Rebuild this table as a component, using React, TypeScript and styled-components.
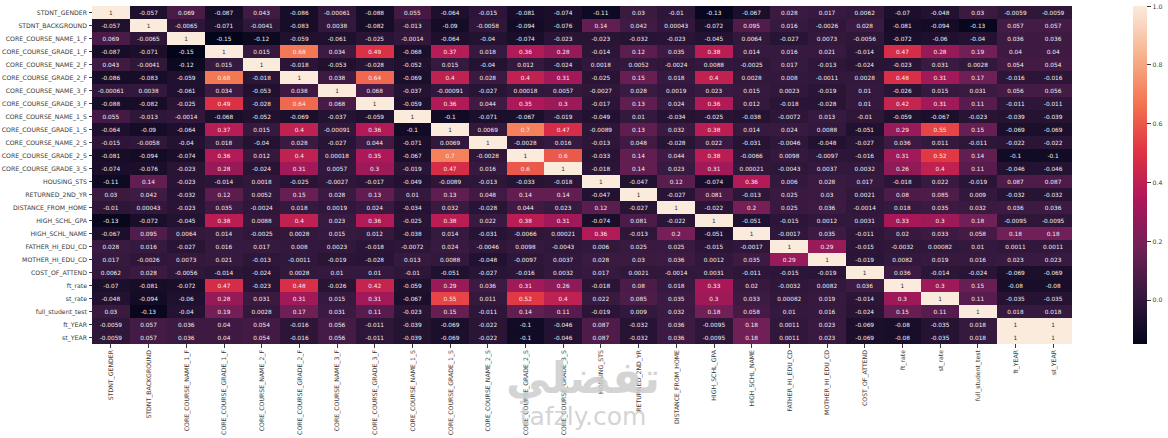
import React from 'react';
import styled, { createGlobalStyle } from 'styled-components';

const GlobalStyle = createGlobalStyle`
  html, body {
    margin: 0;
    padding: 0;
    background: #ffffff;
  }
  body {
    width: 1168px;
    height: 438px;
    overflow: hidden;
    font-family: "DejaVu Sans", "Liberation Sans", sans-serif;
  }
`;

const LABELS = [
  'STDNT_GENDER',
  'STDNT_BACKGROUND',
  'CORE_COURSE_NAME_1_F',
  'CORE_COURSE_GRADE_1_F',
  'CORE_COURSE_NAME_2_F',
  'CORE_COURSE_GRADE_2_F',
  'CORE_COURSE_NAME_3_F',
  'CORE_COURSE_GRADE_3_F',
  'CORE_COURSE_NAME_1_S',
  'CORE_COURSE_GRADE_1_S',
  'CORE_COURSE_NAME_2_S',
  'CORE_COURSE_GRADE_2_S',
  'CORE_COURSE_GRADE_3_S',
  'HOUSING_STS',
  'RETURNED_2ND_YR',
  'DISTANCE_FROM_HOME',
  'HIGH_SCHL_GPA',
  'HIGH_SCHL_NAME',
  'FATHER_HI_EDU_CD',
  'MOTHER_HI_EDU_CD',
  'COST_OF_ATTEND',
  'ft_rate',
  'st_rate',
  'full_student_test',
  'ft_YEAR',
  'st_YEAR'
];

// upper triangle of the correlation matrix, row i starts at column i
const UPPER: number[][] = [
  [1, -0.057, 0.069, -0.087, 0.043, -0.086, -0.00061, -0.088, 0.055, -0.064, -0.015, -0.081, -0.074, -0.11, 0.03, -0.01, -0.13, -0.067, 0.028, 0.017, 0.0062, -0.07, -0.048, 0.03, -0.0059, -0.0059],
  [1, -0.0065, -0.071, -0.0041, -0.083, 0.0038, -0.082, -0.013, -0.09, -0.0058, -0.094, -0.076, 0.14, 0.042, 0.00043, -0.072, 0.095, 0.016, -0.0026, 0.028, -0.081, -0.094, -0.13, 0.057, 0.057],
  [1, -0.15, -0.12, -0.059, -0.061, -0.025, -0.0014, -0.064, -0.04, -0.074, -0.023, -0.023, -0.032, -0.023, -0.045, 0.0064, -0.027, 0.0073, -0.0056, -0.072, -0.06, -0.04, 0.036, 0.036],
  [1, 0.015, 0.68, 0.034, 0.49, -0.068, 0.37, 0.018, 0.36, 0.28, -0.014, 0.12, 0.035, 0.38, 0.014, 0.016, 0.021, -0.014, 0.47, 0.28, 0.19, 0.04, 0.04],
  [1, -0.018, -0.053, -0.028, -0.052, 0.015, -0.04, 0.012, -0.024, 0.0018, 0.0052, -0.0024, 0.0088, -0.0025, 0.017, -0.013, -0.024, -0.023, 0.031, 0.0028, 0.054, 0.054],
  [1, 0.038, 0.64, -0.069, 0.4, 0.028, 0.4, 0.31, -0.025, 0.15, 0.018, 0.4, 0.0028, 0.008, -0.0011, 0.0028, 0.48, 0.31, 0.17, -0.016, -0.016],
  [1, 0.068, -0.037, -0.00091, -0.027, 0.00018, 0.0057, -0.0027, 0.028, 0.0019, 0.023, 0.015, 0.0023, -0.019, 0.01, -0.026, 0.015, 0.031, 0.056, 0.056],
  [1, -0.059, 0.36, 0.044, 0.35, 0.3, -0.017, 0.13, 0.024, 0.36, 0.012, -0.018, -0.028, 0.01, 0.42, 0.31, 0.11, -0.011, -0.011],
  [1, -0.1, -0.071, -0.067, -0.019, -0.049, 0.01, -0.034, -0.025, -0.038, -0.0072, 0.013, -0.01, -0.059, -0.067, -0.023, -0.039, -0.039],
  [1, 0.0069, 0.7, 0.47, -0.0089, 0.13, 0.032, 0.38, 0.014, 0.024, 0.0088, -0.051, 0.29, 0.55, 0.15, -0.069, -0.069],
  [1, -0.0028, 0.016, -0.013, 0.048, -0.028, 0.022, -0.031, -0.0046, -0.048, -0.027, 0.036, 0.011, -0.011, -0.022, -0.022],
  [1, 0.6, -0.033, 0.14, 0.044, 0.38, -0.0066, 0.0098, -0.0097, -0.016, 0.31, 0.52, 0.14, -0.1, -0.1],
  [1, -0.018, 0.14, 0.023, 0.31, 0.00021, -0.0043, 0.0037, 0.0032, 0.26, 0.4, 0.11, -0.046, -0.046],
  [1, -0.047, 0.12, -0.074, 0.36, 0.006, 0.028, 0.017, -0.018, 0.022, -0.019, 0.087, 0.087],
  [1, -0.027, 0.081, -0.013, 0.025, 0.03, 0.0021, 0.08, 0.085, 0.009, -0.032, -0.032],
  [1, -0.022, 0.2, 0.025, 0.036, -0.0014, 0.018, 0.035, 0.032, 0.036, 0.036],
  [1, -0.051, -0.015, 0.0012, 0.0031, 0.33, 0.3, 0.18, -0.0095, -0.0095],
  [1, -0.0017, 0.035, -0.011, 0.02, 0.033, 0.058, 0.18, 0.18],
  [1, 0.29, -0.015, -0.0032, 0.00082, 0.01, 0.0011, 0.0011],
  [1, -0.019, 0.0082, 0.019, 0.016, 0.023, 0.023],
  [1, 0.036, -0.014, -0.024, -0.069, -0.069],
  [1, 0.3, 0.15, -0.08, -0.08],
  [1, 0.11, -0.035, -0.035],
  [1, 0.018, 0.018],
  [1, 1],
  [1]
];

function buildMatrix(): number[][] {
  const n = LABELS.length;
  const m = Array.from({ length: n }, () => new Array<number>(n).fill(0));
  UPPER.forEach((row, i) => {
    row.forEach((v, k) => {
      m[i][i + k] = v;
      m[i + k][i] = v;
    });
  });
  return m;
}

const MATRIX = buildMatrix();

// seaborn "rocket", sampled at 0, 1/7 ... 6/7, 1
const ROCKET: [number, number, number][] = [
  [3, 5, 26],
  [53, 25, 62],
  [112, 31, 87],
  [173, 23, 89],
  [225, 51, 66],
  [243, 118, 81],
  [246, 180, 143],
  [250, 235, 221]
];
const VMIN = -0.15;
const VMAX = 1;

function rocket(v: number): [number, number, number] {
  const t = Math.min(1, Math.max(0, (v - VMIN) / (VMAX - VMIN)));
  const pos = t * (ROCKET.length - 1);
  const i = Math.min(Math.floor(pos), ROCKET.length - 2);
  const f = pos - i;
  const a = ROCKET[i];
  const b = ROCKET[i + 1];
  return [0, 1, 2].map((c) => Math.round(a[c] + (b[c] - a[c]) * f)) as [number, number, number];
}

function luminance([r, g, b]: [number, number, number]): number {
  const lin = (c: number) => {
    const s = c / 255;
    return s <= 0.03928 ? s / 12.92 : Math.pow((s + 0.055) / 1.055, 2.4);
  };
  return 0.2126 * lin(r) + 0.7152 * lin(g) + 0.0722 * lin(b);
}

const CELL_H = 13;
const MAP_W = 980;
const MAP_H = CELL_H * LABELS.length;
const CB_STEP = (0.2 / (VMAX - VMIN)) * MAP_H;

const Figure = styled.div`
  position: relative;
  display: flex;
  align-items: flex-start;
  width: 1168px;
  height: 438px;
  padding-top: 6px;
  box-sizing: border-box;
`;

const Plot = styled.div`
  display: grid;
  grid-template-columns: 92px ${MAP_W}px;
  grid-template-rows: ${MAP_H}px auto;
`;

const YAxis = styled.div`
  display: grid;
  grid-template-rows: repeat(${LABELS.length}, ${CELL_H}px);
`;

const YTick = styled.div`
  display: flex;
  align-items: center;
  justify-content: flex-end;
  gap: 1.5px;
  font-size: 6.2px;
  color: #3a3a3a;
  white-space: nowrap;
`;

const TickH = styled.span`
  width: 3.5px;
  height: 0.8px;
  background: #3a3a3a;
`;

const Heatmap = styled.div`
  display: grid;
  grid-template-columns: repeat(${LABELS.length}, 1fr);
  grid-template-rows: repeat(${LABELS.length}, ${CELL_H}px);
`;

const Cell = styled.div.attrs<{ $value: number }>((p) => {
  const rgb = rocket(p.$value);
  return {
    style: {
      background: `rgb(${rgb.join(',')})`,
      color: luminance(rgb) > 0.408 ? '#2b2b2b' : '#f2eef0'
    }
  };
})<{ $value: number }>`
  display: flex;
  align-items: center;
  justify-content: center;
  font-size: 5.8px;
  white-space: nowrap;
`;

const XAxis = styled.div`
  grid-column: 2;
  display: grid;
  grid-template-columns: repeat(${LABELS.length}, 1fr);
`;

const XTick = styled.div`
  display: flex;
  flex-direction: column;
  align-items: center;
`;

const TickV = styled.span`
  width: 0.8px;
  height: 3.5px;
  margin-bottom: 2px;
  background: #3a3a3a;
`;

const XLabel = styled.span`
  writing-mode: vertical-rl;
  transform: rotate(180deg);
  font-size: 6.2px;
  color: #3a3a3a;
  white-space: nowrap;
`;

const Colorbar = styled.div`
  display: flex;
  margin-left: 61px;
`;

const Bar = styled.div`
  width: 14px;
  height: ${MAP_H}px;
  background: linear-gradient(
    to bottom,
    #faebdd 0%,
    #f6b48f 14.29%,
    #f37651 28.57%,
    #e13342 42.86%,
    #ad1759 57.14%,
    #701f57 71.43%,
    #35193e 85.71%,
    #03051a 100%
  );
`;

const CbTicks = styled.div`
  display: flex;
  flex-direction: column;
  gap: ${CB_STEP - 8}px;
  margin-top: -4px;
`;

const CbTick = styled.div`
  display: flex;
  align-items: center;
  gap: 2px;
  height: 8px;
  font-size: 6.2px;
  color: #3a3a3a;
`;

const Watermark = styled.div`
  position: absolute;
  left: 505px;
  top: 350px;
  width: 156px;
  display: flex;
  flex-direction: column;
  align-items: center;
  pointer-events: none;
  color: rgba(205, 205, 205, 0.85);
`;

const WatermarkArabic = styled.span`
  font-family: "DejaVu Sans", sans-serif;
  font-weight: bold;
  font-size: 44px;
  line-height: 56px;
`;

const WatermarkUrl = styled.span`
  font-family: "DejaVu Sans", sans-serif;
  font-size: 25px;
  line-height: 26px;
  margin-top: -2px;
`;

export default function App(): JSX.Element {
  return <>
    <GlobalStyle />
    <Figure>
      <Plot>
        <YAxis>
          {LABELS.map((l) => (
            <YTick key={l}>
              {l}
              <TickH />
            </YTick>
          ))}
        </YAxis>
        <Heatmap>
          {MATRIX.map((row, i) =>
            row.map((v, j) => (
              <Cell key={`${i}-${j}`} $value={v}>{String(v)}</Cell>
            ))
          )}
        </Heatmap>
        <XAxis>
          {LABELS.map((l) => (
            <XTick key={l}>
              <TickV />
              <XLabel>{l}</XLabel>
            </XTick>
          ))}
        </XAxis>
      </Plot>
      <Colorbar>
        <Bar />
        <CbTicks>
          {['1.0', '0.8', '0.6', '0.4', '0.2', '0.0'].map((t) => (
            <CbTick key={t}>
              <TickH />
              {t}
            </CbTick>
          ))}
        </CbTicks>
      </Colorbar>
      <Watermark>
        <WatermarkArabic>تفضلي</WatermarkArabic>
        <WatermarkUrl>tafzly.com</WatermarkUrl>
      </Watermark>
    </Figure>
  </>;
}
